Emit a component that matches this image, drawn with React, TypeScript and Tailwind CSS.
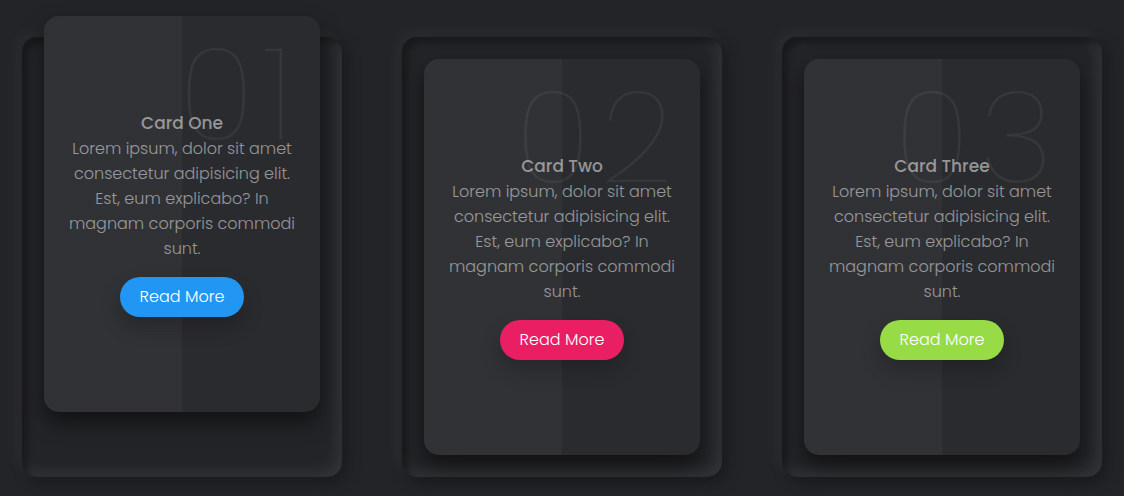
const cards = [
  { num: "01", title: "Card One", color: "bg-[#2196f3]", lifted: true },
  { num: "02", title: "Card Two", color: "bg-[#e91e63]", lifted: false },
  { num: "03", title: "Card Three", color: "bg-[#97dc47]", lifted: false },
];

const font = { fontFamily: '"Poppins", "Open Sans", "DejaVu Sans", sans-serif' };

function Card({ num, title, color, lifted }: (typeof cards)[number]) {
  return (
    <div className="h-[440px] w-[320px] rounded-[15px] bg-[#232427] p-[22px] shadow-[inset_5px_5px_6px_rgba(0,0,0,0.35),inset_-5px_-5px_15px_rgba(255,255,255,0.08),5px_5px_15px_rgba(0,0,0,0.3),-5px_-5px_15px_rgba(255,255,255,0.05)]">
      <div
        className={`relative flex h-full flex-col items-center justify-center overflow-hidden rounded-[15px] bg-[#2a2b2f] bg-[linear-gradient(90deg,rgba(255,255,255,0.03)_50%,transparent_50%)] px-5 text-center shadow-[0_10px_20px_rgba(0,0,0,0.5)] ${
          lifted ? "-translate-y-[43px]" : ""
        }`}
      >
        <span className="absolute right-[17px] top-[15px] text-[128px] leading-none font-thin tracking-[10px] text-white/[0.06]">
          {num}
        </span>
        <h3 className="relative text-[17px] leading-[25px] font-medium text-white/50">{title}</h3>
        <p className="relative text-[16px] leading-[25px] font-light text-white/50">
          Lorem ipsum, dolor sit amet consectetur adipisicing elit. Est, eum explicabo? In magnam corporis commodi sunt.
        </p>
        <a
          href="#"
          className={`relative mt-4 rounded-full px-5 py-2 text-[16px] leading-6 font-light text-white shadow-[0_10px_20px_rgba(0,0,0,0.2)] ${color}`}
        >
          Read More
        </a>
      </div>
    </div>
  );
}

export default function App() {
  return (
    <div className="min-h-[496px] w-full bg-[#232427] pt-[37px]" style={font}>
      <div className="flex justify-center gap-[60px]">
        {cards.map((c) => (
          <Card key={c.num} {...c} />
        ))}
      </div>
    </div>
  );
}
